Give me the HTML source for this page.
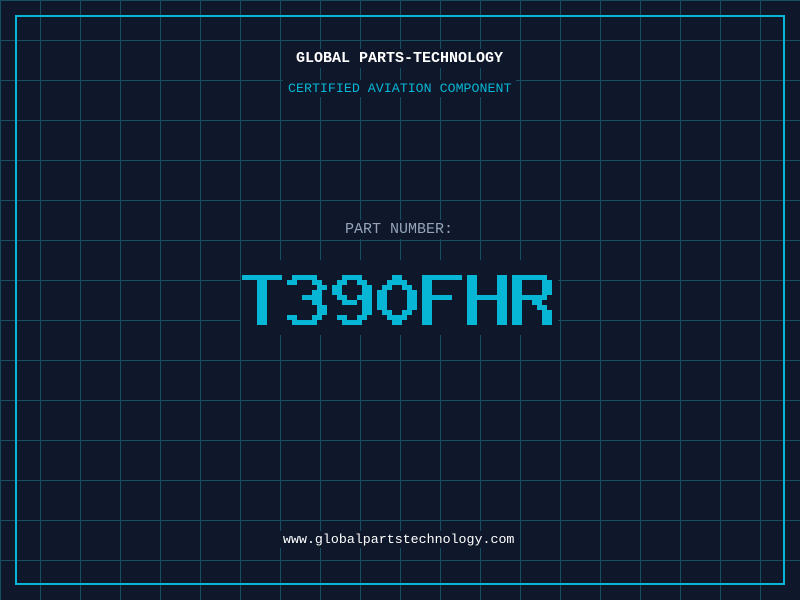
<!DOCTYPE html>
<html><head><meta charset="utf-8"><style>
html,body{margin:0;padding:0}
body{width:800px;height:600px;position:relative;overflow:hidden;background:#0f172a;
background-image:repeating-linear-gradient(90deg,#164e63 0 1px,transparent 1px 40px),repeating-linear-gradient(180deg,#164e63 0 1px,transparent 1px 40px);}
.border{position:absolute;left:15px;top:15px;width:766px;height:566px;border:2px solid #06b6d4;}
.t{position:absolute;font-family:"Liberation Mono",monospace;white-space:nowrap;background:#0f172a;line-height:1;}
</style></head><body>
<div class="border"></div>
<div class="t" style="left:290px;top:49px;font-size:15px;font-weight:bold;color:#fff;padding:2px 6px;">GLOBAL PARTS-TECHNOLOGY</div>
<div class="t" style="left:283px;top:80px;font-size:13.3px;color:#06b6d4;padding:2px 5px;">CERTIFIED AVIATION COMPONENT</div>
<div class="t" style="left:339px;top:220px;font-size:15px;color:#94a3b8;padding:2px 6px;">PART NUMBER:</div>
<div class="t" style="left:278px;top:531px;font-size:13.3px;color:#fff;padding:2px 5px;">www.globalpartstechnology.com</div>
<div style="position:absolute;left:241px;top:260px;width:317px;height:75px;background:#0f172a"></div>
<svg style="position:absolute;left:0;top:0" width="800" height="600" id="s"></svg>
<script>
var G={
T:["########","...##...","...##...","...##...","...##...","...##...","...##...","...##...","...##...","...##..."],
3:[".#####..","##...##.","......##",".....##.","...####.",".....##.","......##","......##","##...##.",".#####.."],
9:["..####..",".##..##.","##....##","##....##",".##..###","..###.##","......##","......##",".##..##.","..####.."],
0:["...##...","..####..",".##..##.","##....##","##....##","##....##","##....##",".##..##.","..####..","...##..."],
F:["########","##......","##......","##......","######..","##......","##......","##......","##......","##......"],
H:["##....##","##....##","##....##","##....##","########","##....##","##....##","##....##","##....##","##....##"],
R:["#######.","##....##","##....##","##....##","#######.","##..##..","##...##.","##....##","##....##","##....##"]};
var s="",w="T390FHR";
for(var i=0;i<w.length;i++){var g=G[w[i]];for(var r=0;r<10;r++)for(var c=0;c<8;c++)if(g[r][c]=="#")s+='<rect x="'+(242+(i*9+c)*5)+'" y="'+(275+r*5)+'" width="5" height="5" fill="#06b6d4"/>';}
document.getElementById("s").innerHTML=s;
</script>
</body></html>
